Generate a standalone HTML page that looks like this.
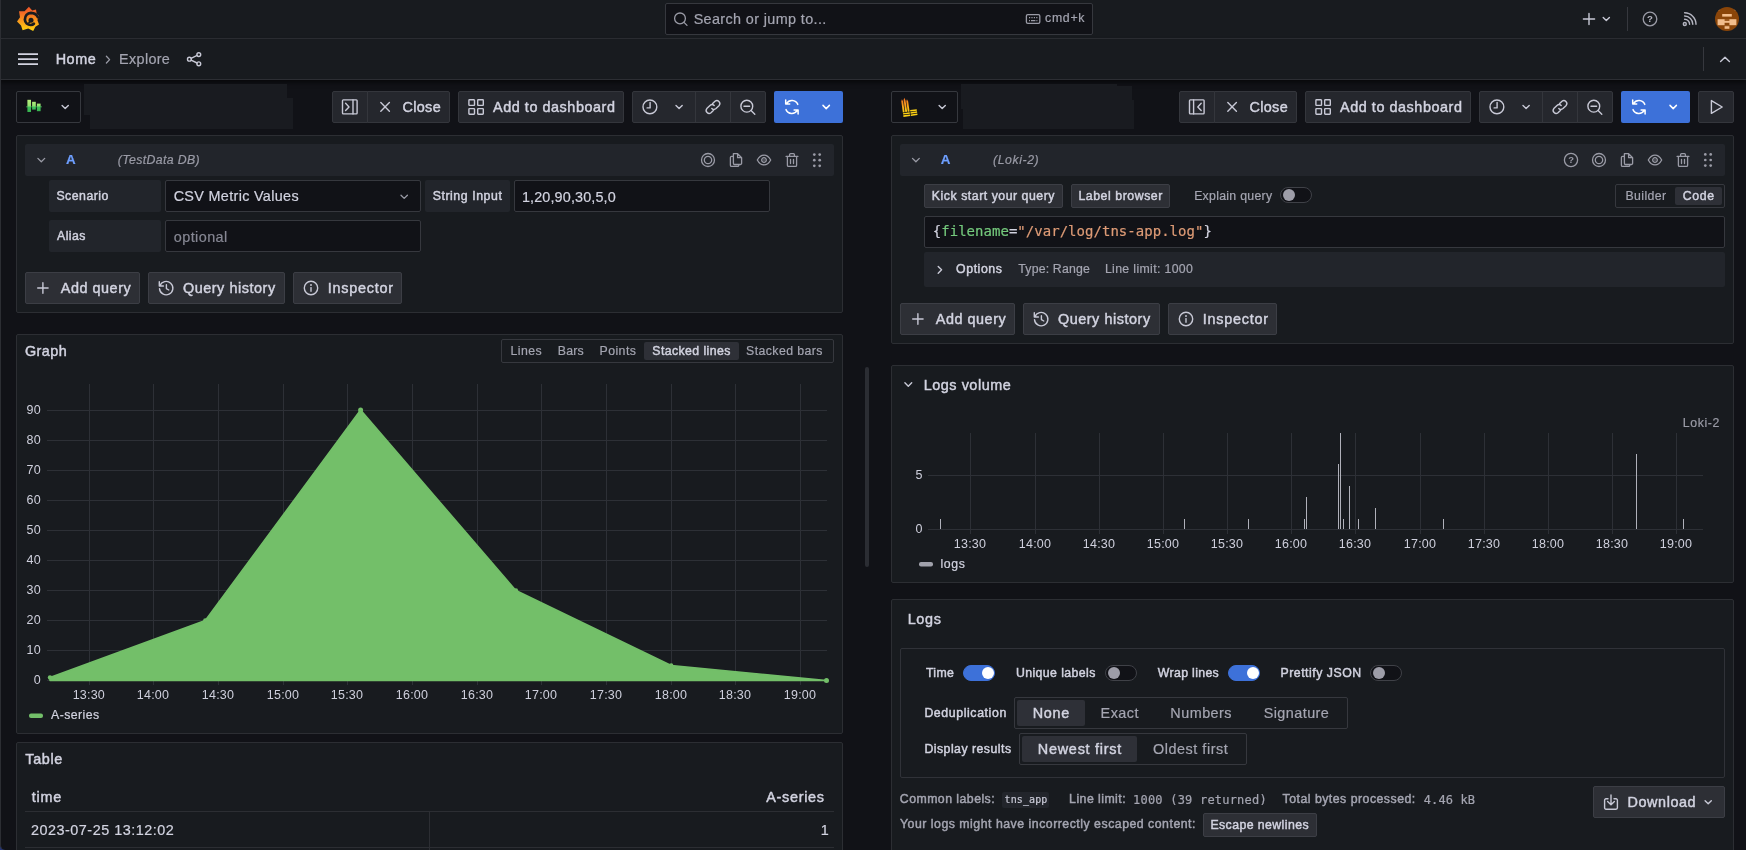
<!DOCTYPE html>
<html lang="en">
<head>
<meta charset="utf-8">
<title>Explore - Grafana</title>
<style>
*{box-sizing:border-box;margin:0;padding:0}
html,body{width:1746px;height:850px;overflow:hidden;background:#111217}
body{position:relative;font-family:"Liberation Sans",sans-serif;color:#ccccdc;font-size:14px}
#root{position:absolute;left:0;top:0;width:1746px;height:850px;overflow:hidden;will-change:transform}
.a{position:absolute}
.t{position:absolute;white-space:nowrap;line-height:20px;height:20px;-webkit-text-stroke:0.2px currentColor}
.m{-webkit-text-stroke:0.45px currentColor}
.mono{font-family:"DejaVu Sans Mono","Liberation Mono",monospace}
.panel{position:absolute;background:#181b1f;border:1px solid #2c2e33;border-radius:2px}
.btn{position:absolute;background:#25272d;border:1px solid #34363c;border-radius:2px;height:32px}
.btn.p{background:#2d2f35;border-color:#3c3e45}
.inp{position:absolute;background:#111217;border:1px solid #36383e;border-radius:2px;height:32px}
.lbl{position:absolute;background:#22252b;border-radius:2px;height:32px}
.row{position:absolute;background:#22252b;border-radius:2px}
svg{position:absolute;overflow:visible}
.ic{fill:none;stroke:#c8c9d6;stroke-width:1.4;stroke-linecap:round;stroke-linejoin:round}
.ig{fill:none;stroke:#9a9ba6;stroke-width:1.3;stroke-linecap:round;stroke-linejoin:round}
.sw{position:absolute;width:32px;height:16px;border-radius:8px;background:#111217;border:1px solid #3f4147}
.sw i{position:absolute;left:2px;top:1px;width:12px;height:12px;border-radius:50%;background:#9d9da8}
.sw.on{background:#3d71d9;border-color:#3d71d9}
.sw.on i{left:17.5px;background:#fff}
.seg{position:absolute;border:1px solid #36383e;border-radius:2px;background:#181b1f}
.act{position:absolute;background:#2e3037;border-radius:2px}
</style>
</head>
<body>
<div id="root">

<!-- ============ TOP NAV ============ -->
<div class="a" style="left:0;top:0;width:1746px;height:39px;background:#181b1f;border-bottom:1px solid #2c2e33"></div>
<div class="a" style="left:0;top:39px;width:1746px;height:41px;background:#181b1f;border-bottom:1px solid #2c2e33;box-shadow:0 3px 4px rgba(0,0,0,.5)"></div>
<div class="a" style="left:0;top:0;width:1px;height:850px;background:#2c2e33"></div>
<div class="a" style="left:665px;top:3px;width:428px;height:32px;background:#111217;border:1px solid #36383e;border-radius:2px"></div>
<div class="a" style="left:1627px;top:7px;width:1px;height:24px;background:#36383e"></div>
<div class="a" style="left:1703px;top:47px;width:1px;height:24px;background:#36383e"></div>

<!-- ============ LEFT TOOLBAR ============ -->
<div class="inp" style="left:16px;top:91px;width:65px"></div>
<div class="a" style="left:84px;top:84px;width:203px;height:30.5px;background:#191b20"></div>
<div class="a" style="left:90px;top:97.5px;width:203px;height:31px;background:#191b20"></div>
<div class="btn" style="left:332px;top:91px;width:36px;border-radius:2px 0 0 2px"></div>
<div class="btn" style="left:367px;top:91px;width:83px;border-radius:0 2px 2px 0"></div>
<div class="btn" style="left:458px;top:91px;width:166px"></div>
<div class="btn" style="left:632px;top:91px;width:64px;border-radius:2px 0 0 2px"></div>
<div class="btn" style="left:695px;top:91px;width:36px;border-radius:0"></div>
<div class="btn" style="left:730px;top:91px;width:36px;border-radius:0 2px 2px 0"></div>
<div class="a" style="left:774px;top:91px;width:69px;height:32px;background:#3d71d9;border-radius:2px"></div>

<!-- ============ RIGHT TOOLBAR ============ -->
<div class="inp" style="left:891px;top:91px;width:67px"></div>
<div class="a" style="left:961px;top:84px;width:156px;height:25px;background:#191b20"></div>
<div class="a" style="left:963px;top:86px;width:169px;height:42.5px;background:#191b20"></div>
<div class="a" style="left:963px;top:100px;width:171px;height:28.5px;background:#191b20"></div>
<div class="btn" style="left:1179px;top:91px;width:36px;border-radius:2px 0 0 2px"></div>
<div class="btn" style="left:1214px;top:91px;width:83px;border-radius:0 2px 2px 0"></div>
<div class="btn" style="left:1305px;top:91px;width:166px"></div>
<div class="btn" style="left:1479px;top:91px;width:64px;border-radius:2px 0 0 2px"></div>
<div class="btn" style="left:1542px;top:91px;width:36px;border-radius:0"></div>
<div class="btn" style="left:1577px;top:91px;width:36px;border-radius:0 2px 2px 0"></div>
<div class="a" style="left:1621px;top:91px;width:69px;height:32px;background:#3d71d9;border-radius:2px"></div>
<div class="btn" style="left:1698px;top:91px;width:36px"></div>

<!-- ============ LEFT: QUERY PANEL ============ -->
<div class="panel" style="left:16px;top:135px;width:827px;height:178px"></div>
<div class="row" style="left:25px;top:144px;width:809px;height:32px"></div>
<div class="lbl" style="left:49px;top:180px;width:112px"></div>
<div class="inp" style="left:165px;top:180px;width:256px"></div>
<div class="lbl" style="left:425px;top:180px;width:85px"></div>
<div class="inp" style="left:514px;top:180px;width:256px"></div>
<div class="lbl" style="left:49px;top:220px;width:112px"></div>
<div class="inp" style="left:165px;top:220px;width:256px"></div>
<div class="btn p" style="left:25px;top:272px;width:115px"></div>
<div class="btn p" style="left:148px;top:272px;width:137px"></div>
<div class="btn p" style="left:293px;top:272px;width:109px"></div>

<!-- ============ LEFT: GRAPH PANEL ============ -->
<div class="panel" style="left:16px;top:334px;width:827px;height:400px"></div>
<div class="seg" style="left:501px;top:339px;width:333px;height:24px"></div>
<div class="act" style="left:644px;top:342px;width:95px;height:18px"></div>

<!-- ============ LEFT: TABLE PANEL ============ -->
<div class="panel" style="left:16px;top:742px;width:827px;height:120px"></div>
<div class="a" style="left:25px;top:811px;width:809px;height:1px;background:#2c2e33"></div>
<div class="a" style="left:25px;top:847px;width:809px;height:1px;background:#2c2e33"></div>
<div class="a" style="left:429px;top:812px;width:1px;height:38px;background:#2c2e33"></div>
<!-- splitter -->
<div class="a" style="left:865px;top:367px;width:4px;height:200px;background:#2b2d33;border-radius:2px"></div>

<!-- ============ RIGHT: QUERY PANEL ============ -->
<div class="panel" style="left:891px;top:135px;width:843px;height:209px"></div>
<div class="row" style="left:900px;top:144px;width:825px;height:32px"></div>
<div class="btn p" style="left:924px;top:184px;width:139px;height:24px"></div>
<div class="btn p" style="left:1071px;top:184px;width:99px;height:24px"></div>
<div class="sw" style="left:1280px;top:187px"><i></i></div>
<div class="seg" style="left:1615px;top:184px;width:110px;height:24px"></div>
<div class="act" style="left:1675px;top:187px;width:47px;height:18px"></div>
<div class="inp" style="left:924px;top:216px;width:801px;height:32px"></div>
<div class="row" style="left:924px;top:252px;width:801px;height:35px"></div>
<div class="btn p" style="left:900px;top:303px;width:115px"></div>
<div class="btn p" style="left:1023px;top:303px;width:137px"></div>
<div class="btn p" style="left:1168px;top:303px;width:109px"></div>

<!-- ============ RIGHT: LOGS VOLUME ============ -->
<div class="panel" style="left:891px;top:365px;width:843px;height:218px"></div>

<!-- ============ RIGHT: LOGS ============ -->
<div class="panel" style="left:891px;top:599px;width:843px;height:260px"></div>
<div class="a" style="left:900px;top:648px;width:825px;height:130px;border:1px solid #303238;border-radius:2px"></div>
<div class="sw on" style="left:963px;top:665px"><i></i></div>
<div class="sw" style="left:1105px;top:665px"><i></i></div>
<div class="sw on" style="left:1228px;top:665px"><i></i></div>
<div class="sw" style="left:1370px;top:665px"><i></i></div>
<div class="seg" style="left:1014px;top:697px;width:334px;height:32px"></div>
<div class="act" style="left:1017px;top:700px;width:68px;height:26px"></div>
<div class="seg" style="left:1019px;top:733px;width:228px;height:32px"></div>
<div class="act" style="left:1022px;top:736px;width:115px;height:26px"></div>
<div class="a" style="left:1002px;top:792px;width:47px;height:16px;background:#22252b;border-radius:2px"></div>
<div class="btn p" style="left:1203px;top:813px;width:114px;height:24px"></div>
<div class="btn p" style="left:1593px;top:786px;width:132px;height:32px"></div>

<div class="a" style="left:0;top:844px;width:6px;height:6px;background:#263572"></div>
<div class="a" style="left:0;top:830px;width:16px;height:20px;background:#111217;border-left:1px solid #2c2e33;border-bottom-left-radius:5px"></div>

<svg id="chart1" style="left:0;top:0" width="850" height="740" font-family="Liberation Sans, sans-serif" font-size="12.5" fill="#cecfdc" letter-spacing="0.2">
<g stroke="#2d3036" stroke-width="1" shape-rendering="crispEdges">
<path d="M47 410.5H827M47 440.5H827M47 470.5H827M47 500.5H827M47 530.5H827M47 560.5H827M47 590.5H827M47 620.5H827M47 650.5H827M47 680.5H827"/>
<path d="M89.5 384V685M153.5 384V685M218.5 384V685M283.5 384V685M347.5 384V685M412.5 384V685M477.5 384V685M541.5 384V685M606.5 384V685M671.5 384V685M735.5 384V685M800.5 384V685"/>
</g>
<path d="M50 677.5L205.3 620.5L360.6 410L515.9 590.5L671.2 665.5L826.5 680.5L50 680.5Z" fill="#73bf69" stroke="#73bf69" stroke-width="1.5" stroke-linejoin="round"/>
<circle cx="50" cy="677.5" r="2.2" fill="#73bf69"/><circle cx="205.3" cy="620.5" r="2.2" fill="#73bf69"/><circle cx="360.6" cy="410" r="2.5" fill="#73bf69"/><circle cx="515.9" cy="590.5" r="2.2" fill="#73bf69"/><circle cx="671.2" cy="665.5" r="2.2" fill="#73bf69"/><circle cx="826.5" cy="680.5" r="2.5" fill="#73bf69"/>
<g text-anchor="end">
<text x="40.8" y="414">90</text><text x="40.8" y="444">80</text><text x="40.8" y="474">70</text><text x="40.8" y="504">60</text><text x="40.8" y="534">50</text><text x="40.8" y="564">40</text><text x="40.8" y="594">30</text><text x="40.8" y="624">20</text><text x="40.8" y="654">10</text><text x="40.8" y="684">0</text>
</g>
<g text-anchor="middle">
<text x="88.8" y="699">13:30</text><text x="153" y="699">14:00</text><text x="218" y="699">14:30</text><text x="283" y="699">15:00</text><text x="347" y="699">15:30</text><text x="412" y="699">16:00</text><text x="477" y="699">16:30</text><text x="541" y="699">17:00</text><text x="606" y="699">17:30</text><text x="671" y="699">18:00</text><text x="735" y="699">18:30</text><text x="800" y="699">19:00</text>
</g>
<rect x="29" y="713.5" width="14" height="4.5" rx="2" fill="#73bf69"/>
</svg>
<svg id="chart2" style="left:0;top:0" width="1746" height="600" font-family="Liberation Sans, sans-serif" font-size="12.5" fill="#cecfdc" letter-spacing="0.2">
<g stroke="#2d3036" stroke-width="1" shape-rendering="crispEdges">
<path d="M928 475.5H1703M928 529.5H1703"/>
<path d="M970.5 433V534M1035.5 433V534M1099.5 433V534M1163.5 433V534M1227.5 433V534M1291.5 433V534M1355.5 433V534M1420.5 433V534M1484.5 433V534M1548.5 433V534M1612.5 433V534M1676.5 433V534"/>
</g>
<g stroke="#b0b1ba" stroke-width="1" shape-rendering="crispEdges">
<path d="M940.5 518.5V529M1184.5 518.5V529M1248.5 518.5V529M1304.5 518.5V529M1306.5 497V529M1338.5 464V529M1340.5 433V529M1343.5 518.5V529M1349.5 486V529M1358.5 518.5V529M1375.5 507.5V529M1443.5 518.5V529M1636.5 454V529M1683.5 518.5V529"/>
</g>
<g text-anchor="end"><text x="922.6" y="479">5</text><text x="922.6" y="532.5">0</text></g>
<g text-anchor="middle">
<text x="970" y="548">13:30</text><text x="1035" y="548">14:00</text><text x="1099" y="548">14:30</text><text x="1163" y="548">15:00</text><text x="1227" y="548">15:30</text><text x="1291" y="548">16:00</text><text x="1355" y="548">16:30</text><text x="1420" y="548">17:00</text><text x="1484" y="548">17:30</text><text x="1548" y="548">18:00</text><text x="1612" y="548">18:30</text><text x="1676" y="548">19:00</text>
</g>
<rect x="919" y="562" width="14" height="4.5" rx="2" fill="#a0a1ab"/>
</svg>

<!-- ============ ICONS ============ -->
<svg id="icons" style="left:0;top:0" width="1746" height="850">
<defs>
<linearGradient id="gl" x1="0" y1="0" x2="0" y2="1"><stop offset="0" stop-color="#ee5528"/><stop offset=".25" stop-color="#f26a25"/><stop offset=".55" stop-color="#f7941e"/><stop offset="1" stop-color="#fdd40e"/></linearGradient>
<linearGradient id="lk" x1="0" y1="0" x2="0" y2="1"><stop offset="0" stop-color="#f36f21"/><stop offset=".6" stop-color="#f9a41a"/><stop offset="1" stop-color="#fbd013"/></linearGradient>
<linearGradient id="td" gradientUnits="userSpaceOnUse" x1="0" y1="99.8" x2="0" y2="112"><stop offset="0" stop-color="#b8ef7d"/><stop offset=".56" stop-color="#8fe070"/><stop offset=".56" stop-color="#3fc15b"/><stop offset="1" stop-color="#37b24f"/></linearGradient>
</defs>

<!-- grafana logo -->
<g>
<path fill="url(#gl)" d="M28.9 6.8L32.2 10.6L36 9.4L36.6 13.4L39.2 16.2L37.4 20L39 24.6L35.4 26.8L33.2 31L28.2 28.6L22.6 30.2L21 25.6L17 21.6L20 17.2L19 11.2L24.6 11.2Z"/>
<path fill="none" stroke="#181b1f" stroke-width="2.7" stroke-linecap="round" d="M37.9 17.2C36.6 14.4 34.2 13 30.9 12.9C27.2 13 25 15.8 24.9 19.6C25.1 22.9 27.6 25 30.8 25C32.2 25 33.2 24.5 33.9 23.8"/>
<circle cx="31" cy="20.3" r="2.5" fill="#181b1f"/>
<path fill="none" stroke="#181b1f" stroke-width="1.8" stroke-linecap="round" d="M31 20.6L29 22.6"/>
</g>
<!-- search -->
<circle class="ig" cx="680" cy="18.4" r="5.4"/><path class="ig" d="M684 22.4L687 25.4"/>
<!-- keyboard -->
<rect class="ig" x="1026.4" y="14.7" width="13.4" height="8.6" rx="1.4"/><path d="M1029 17.6h1.2M1031.4 17.6h1.2M1033.8 17.6h1.2M1036.2 17.6h1.2M1029 20.6h1M1031 20.6h4.4M1036.4 20.6h1" stroke="#9a9ba6" stroke-width="1.1" fill="none"/>
<!-- top right -->
<path class="ic" stroke="#bfc0cc" stroke-width="1.6" d="M1583.4 19H1594.6M1589 13.4V24.6"/>
<g transform="translate(1606.3 18.9)"><path class="ic" stroke="#b4b5c0" stroke-width="1.3" d="M-3.1 -1.5L0 1.6L3.1 -1.5"/></g>
<circle class="ig" cx="1650" cy="19" r="6.8" stroke="#b4b5c0"/><text x="1650" y="22.4" text-anchor="middle" font-family="Liberation Sans, sans-serif" font-size="9.6" font-weight="700" fill="#b4b5c0">?</text>
<g fill="none" stroke="#b4b5c0" stroke-width="1.4" stroke-linecap="round"><circle cx="1684.8" cy="24" r="1.5"/><path d="M1684.6 19.2A4.9 4.9 0 0 1 1689.6 24.2M1684.6 16A8.2 8.2 0 0 1 1692.8 24.2M1684.6 12.8A11.4 11.4 0 0 1 1696 24.2"/></g>
<!-- avatar -->
<clipPath id="avc"><circle cx="1727" cy="19" r="12"/></clipPath>
<g clip-path="url(#avc)"><rect x="1715" y="7" width="24" height="24" fill="#8a4509"/>
<g fill="#f2bd8c"><rect x="1722.2" y="14" width="9.6" height="2.6"/><rect x="1717.6" y="19.2" width="18.8" height="6"/><rect x="1724.6" y="26.2" width="4.8" height="2.6"/><rect x="1717" y="8" width="2.4" height="2.4"/><rect x="1734.6" y="8" width="2.4" height="2.4"/></g>
<g fill="#8a4509"><rect x="1724.6" y="19.2" width="4.8" height="1.6"/><rect x="1724.6" y="22.8" width="4.8" height="2.4"/></g>
</g>
<!-- hamburger / crumbs -->
<path d="M18 54.2H38M18 59.2H38M18 64.2H38" stroke="#d2d3e0" stroke-width="1.7" fill="none"/>
<path class="ig" d="M106.4 56.2L109.6 59.6L106.4 63"/>
<g class="ic" stroke-width="1.3"><circle cx="198.8" cy="54.6" r="1.9"/><circle cx="189.4" cy="59.2" r="1.9"/><circle cx="198.8" cy="63.8" r="1.9"/><path d="M191.1 58.3L197.1 55.4M191.1 60.1L197.1 63"/></g>
<path class="ic" stroke="#b4b5c0" stroke-width="1.7" d="M1720.6 61.5L1725 57.2L1729.4 61.5"/>

<!-- DS pickers -->
<g><rect x="27.4" y="99.8" width="3.6" height="12.2" fill="url(#td)"/><rect x="32.1" y="101.8" width="3.7" height="7.8" fill="url(#td)"/><rect x="36.9" y="103.6" width="3.7" height="7.6" fill="url(#td)"/><rect x="26" y="106.4" width="16" height="0.9" fill="#3fc15b" opacity=".8"/></g>
<g transform="translate(65.2 107)"><path class="ic" stroke="#b4b5c0" stroke-width="1.3" d="M-3.1 -1.5L0 1.6L3.1 -1.5"/></g>
<g transform="translate(901 99.3) rotate(-8) scale(0.92)">
<path fill="url(#lk)" d="M0 2.2L1 0L2 2.6V14.4H0ZM2.7 1.2L3.7 -1.2L4.7 1.6V14.4H2.7ZM5.4 3L6.4 0.8L7.4 3.4V14.4H5.4Z"/>
<path fill="#fbd013" d="M0 15.2H7.4V16.8H0ZM0 17.6H7.4V19.4H0ZM8.2 13H15.4V14.6H8.2ZM8.2 15.4H15.4V17H8.2ZM8.2 17.8H15.4V19.4H8.2Z"/>
</g>
<g transform="translate(942.2 107)"><path class="ic" stroke="#b4b5c0" stroke-width="1.3" d="M-3.1 -1.5L0 1.6L3.1 -1.5"/></g>

<!-- toolbar left -->
<g transform="translate(349.8 106.9)"><rect class="ic" x="-7.3" y="-7" width="14.6" height="14" rx="0.8"/><path class="ic" d="M3.2 -7V7M-4.2 -3.6L-0.8 0L-4.2 3.6"/></g>
<g transform="translate(385.1 106.9)"><path class="ic" d="M-4.3 -4.3L4.3 4.3M4.3 -4.3L-4.3 4.3"/></g>
<g transform="translate(476.1 107)"><rect class="ic" x="-7.2" y="-7.2" width="5.6" height="5.6" rx="0.6"/><rect class="ic" x="1.6" y="-7.2" width="5.6" height="5.6" rx="0.6"/><rect class="ic" x="-7.2" y="1.6" width="5.6" height="5.6" rx="0.6"/><rect class="ic" x="1.6" y="1.6" width="5.6" height="5.6" rx="0.6"/></g>
<g transform="translate(649.9 106.9)"><circle class="ic" r="6.9"/><path class="ic" d="M0.2 -4.4V1H-2.8"/></g>
<g transform="translate(679.1 107)"><path class="ic" stroke="#b4b5c0" stroke-width="1.3" d="M-3.1 -1.5L0 1.6L3.1 -1.5"/></g>
<g transform="translate(713 107)"><path class="ic" d="M-0.6 -3.2L2 -5.8A3 3 0 0 1 6.2 -1.6L3 1.6A3 3 0 0 1 -1.2 1.4M0.6 3.2L-2 5.8A3 3 0 0 1 -6.2 1.6L-3 -1.6A3 3 0 0 1 1.2 -1.4"/></g>
<g transform="translate(747.8 107.2)"><circle class="ic" cx="-1" cy="-1" r="5.9"/><path class="ic" d="M3.3 3.3L7 7M-3.8 -1H1.8"/></g>
<g transform="translate(791.9 107)"><path d="M5.9 -2.6A6.4 6.4 0 0 0 -5.4 -3.4M-6.2 -7V-3H-2.2M-5.9 2.6A6.4 6.4 0 0 0 5.4 3.4M6.2 7V3H2.2" fill="none" stroke="#fff" stroke-width="1.5" stroke-linecap="round" stroke-linejoin="round"/></g>
<g transform="translate(826.2 107)"><path d="M-3.2 -1.6L0 1.6L3.2 -1.6" fill="none" stroke="#fff" stroke-width="1.5" stroke-linecap="round" stroke-linejoin="round"/></g>
<!-- toolbar right -->
<g transform="translate(1196.8 106.9)"><rect class="ic" x="-7.3" y="-7" width="14.6" height="14" rx="0.8"/><path class="ic" d="M-3.2 -7V7M4.4 -3.6L1 0L4.4 3.6"/></g>
<g transform="translate(1232.1 106.9)"><path class="ic" d="M-4.3 -4.3L4.3 4.3M4.3 -4.3L-4.3 4.3"/></g>
<g transform="translate(1323.1 107)"><rect class="ic" x="-7.2" y="-7.2" width="5.6" height="5.6" rx="0.6"/><rect class="ic" x="1.6" y="-7.2" width="5.6" height="5.6" rx="0.6"/><rect class="ic" x="-7.2" y="1.6" width="5.6" height="5.6" rx="0.6"/><rect class="ic" x="1.6" y="1.6" width="5.6" height="5.6" rx="0.6"/></g>
<g transform="translate(1496.9 106.9)"><circle class="ic" r="6.9"/><path class="ic" d="M0.2 -4.4V1H-2.8"/></g>
<g transform="translate(1526.1 107)"><path class="ic" stroke="#b4b5c0" stroke-width="1.3" d="M-3.1 -1.5L0 1.6L3.1 -1.5"/></g>
<g transform="translate(1560 107)"><path class="ic" d="M-0.6 -3.2L2 -5.8A3 3 0 0 1 6.2 -1.6L3 1.6A3 3 0 0 1 -1.2 1.4M0.6 3.2L-2 5.8A3 3 0 0 1 -6.2 1.6L-3 -1.6A3 3 0 0 1 1.2 -1.4"/></g>
<g transform="translate(1594.8 107.2)"><circle class="ic" cx="-1" cy="-1" r="5.9"/><path class="ic" d="M3.3 3.3L7 7M-3.8 -1H1.8"/></g>
<g transform="translate(1638.9 107)"><path d="M5.9 -2.6A6.4 6.4 0 0 0 -5.4 -3.4M-6.2 -7V-3H-2.2M-5.9 2.6A6.4 6.4 0 0 0 5.4 3.4M6.2 7V3H2.2" fill="none" stroke="#fff" stroke-width="1.5" stroke-linecap="round" stroke-linejoin="round"/></g>
<g transform="translate(1673.2 107)"><path d="M-3.2 -1.6L0 1.6L3.2 -1.6" fill="none" stroke="#fff" stroke-width="1.5" stroke-linecap="round" stroke-linejoin="round"/></g>
<path class="ic" d="M1711.4 100.6V113.4L1722.2 107Z"/>

<!-- left query row -->
<path class="ig" d="M37.9 158.4L41.3 161.8L44.7 158.4"/>
<g transform="translate(708 160)"><circle class="ig" r="6.5"/><circle class="ig" r="3.7"/></g><g transform="translate(736 160)"><path class="ig" d="M-2.6 -6.3H1.6L5.6 -2.3V3.3A1.2 1.2 0 0 1 4.4 4.5H-1.4A1.2 1.2 0 0 1 -2.6 3.3ZM1.6 -6.3V-2.3H5.6M-2.6 -3.6H-4.4A1.2 1.2 0 0 0 -5.6 -2.4V5.2A1.2 1.2 0 0 0 -4.4 6.4H1.6A1.2 1.2 0 0 0 2.8 5.2V4.5"/></g><g transform="translate(764 160)"><path class="ig" d="M-6.7 0C-4.8 -3.5 -2.5 -4.9 0 -4.9S4.8 -3.5 6.7 0C4.8 3.5 2.5 4.9 0 4.9S-4.8 3.5 -6.7 0Z"/><circle class="ig" r="2.3"/><circle r="0.7" fill="#9a9ba6"/></g><g transform="translate(792 160)"><path class="ig" d="M-5.9 -3.6H5.9M-2.4 -3.6V-5.4A1 1 0 0 1 -1.4 -6.4H1.4A1 1 0 0 1 2.4 -5.4V-3.6M-4.6 -3.6V5.2A1.2 1.2 0 0 0 -3.4 6.4H3.4A1.2 1.2 0 0 0 4.6 5.2V-3.6M-1.5 -0.6V3.6M1.5 -0.6V3.6"/></g><g transform="translate(817 160.2)" fill="#9a9ba6"><circle cx="-2.7" cy="-5.6" r="1.35"/><circle cx="2.7" cy="-5.6" r="1.35"/><circle cx="-2.7" cy="0" r="1.35"/><circle cx="2.7" cy="0" r="1.35"/><circle cx="-2.7" cy="5.6" r="1.35"/><circle cx="2.7" cy="5.6" r="1.35"/></g>
<path class="ig" stroke="#b4b5c0" d="M401 195.2L404.2 198.4L407.4 195.2"/>
<g transform="translate(42.9 288)"><path class="ic" d="M-5.2 0H5.2M0 -5.2V5.2"/></g><g transform="translate(166.2 288)"><path class="ic" d="M-6.3 -2.2A6.7 6.7 0 1 1 -6.7 0.6M-6.9 -6.2V-2H-2.8M0.2 -3.2V0.6L2.6 2"/></g><g transform="translate(311 288)"><circle class="ic" r="6.7"/><path class="ic" d="M0 -0.4V3.2"/><circle cx="0" cy="-3" r="0.95" fill="#c8c9d6"/></g>

<!-- right query row -->
<path class="ig" d="M912.5 158.4L915.9 161.8L919.3 158.4"/>
<g transform="translate(1571 160)"><circle class="ig" r="6.6"/><text x="0" y="3.3" text-anchor="middle" font-family="Liberation Sans, sans-serif" font-size="9.4" font-weight="700" fill="#9a9ba6">?</text></g><g transform="translate(1599 160)"><circle class="ig" r="6.5"/><circle class="ig" r="3.7"/></g><g transform="translate(1627 160)"><path class="ig" d="M-2.6 -6.3H1.6L5.6 -2.3V3.3A1.2 1.2 0 0 1 4.4 4.5H-1.4A1.2 1.2 0 0 1 -2.6 3.3ZM1.6 -6.3V-2.3H5.6M-2.6 -3.6H-4.4A1.2 1.2 0 0 0 -5.6 -2.4V5.2A1.2 1.2 0 0 0 -4.4 6.4H1.6A1.2 1.2 0 0 0 2.8 5.2V4.5"/></g><g transform="translate(1655 160)"><path class="ig" d="M-6.7 0C-4.8 -3.5 -2.5 -4.9 0 -4.9S4.8 -3.5 6.7 0C4.8 3.5 2.5 4.9 0 4.9S-4.8 3.5 -6.7 0Z"/><circle class="ig" r="2.3"/><circle r="0.7" fill="#9a9ba6"/></g><g transform="translate(1683 160)"><path class="ig" d="M-5.9 -3.6H5.9M-2.4 -3.6V-5.4A1 1 0 0 1 -1.4 -6.4H1.4A1 1 0 0 1 2.4 -5.4V-3.6M-4.6 -3.6V5.2A1.2 1.2 0 0 0 -3.4 6.4H3.4A1.2 1.2 0 0 0 4.6 5.2V-3.6M-1.5 -0.6V3.6M1.5 -0.6V3.6"/></g><g transform="translate(1708 160)" fill="#9a9ba6"><circle cx="-2.7" cy="-5.6" r="1.35"/><circle cx="2.7" cy="-5.6" r="1.35"/><circle cx="-2.7" cy="0" r="1.35"/><circle cx="2.7" cy="0" r="1.35"/><circle cx="-2.7" cy="5.6" r="1.35"/><circle cx="2.7" cy="5.6" r="1.35"/></g>
<path class="ic" stroke-width="1.3" d="M938.2 266.4L941.6 269.8L938.2 273.2"/>
<g transform="translate(917.9 319)"><path class="ic" d="M-5.2 0H5.2M0 -5.2V5.2"/></g><g transform="translate(1041.2 319)"><path class="ic" d="M-6.3 -2.2A6.7 6.7 0 1 1 -6.7 0.6M-6.9 -6.2V-2H-2.8M0.2 -3.2V0.6L2.6 2"/></g><g transform="translate(1186 319)"><circle class="ic" r="6.7"/><path class="ic" d="M0 -0.4V3.2"/><circle cx="0" cy="-3" r="0.95" fill="#c8c9d6"/></g>
<!-- logs volume chevron -->
<path class="ic" d="M904.9 382.8L908.3 386.2L911.7 382.8"/>
<!-- download -->
<path class="ic" d="M1611 795V804.6M1607.6 801.4L1611 804.8L1614.4 801.4M1608 798.8H1606A1.4 1.4 0 0 0 1604.6 800.2V807.8A1.4 1.4 0 0 0 1606 809.2H1616A1.4 1.4 0 0 0 1617.4 807.8V800.2A1.4 1.4 0 0 0 1616 798.8H1614"/>
<g transform="translate(1708.2 802.2)"><path class="ic" stroke="#b4b5c0" stroke-width="1.3" d="M-3.1 -1.5L0 1.6L3.1 -1.5"/></g>
</svg>

<!-- ============ TEXT ============ -->
<div class="t" id="tsearch" style="left:693.67px;top:8.91px;font-size:14.4px;color:#a4a5b1;letter-spacing:0.370px">Search or jump to...</div>
<div class="t" id="tcmd" style="left:1045.01px;top:7.64px;font-size:12.3px;color:#a4a5b1;letter-spacing:0.728px">cmd+k</div>
<div class="t m" id="thome" style="left:55.71px;top:49.01px;font-size:14.4px;color:#d2d3e0;letter-spacing:0.524px">Home</div>
<div class="t" id="texplore" style="left:119.12px;top:49.01px;font-size:14.4px;color:#a4a5b1;letter-spacing:0.324px">Explore</div>
<div class="t m" id="tclose1" style="left:402.46px;top:96.91px;font-size:14.4px;color:#d2d3e0;letter-spacing:0.358px">Close</div>
<div class="t m" id="tadd1" style="left:493.09px;top:96.91px;font-size:14.4px;color:#d2d3e0;letter-spacing:0.548px">Add to dashboard</div>
<div class="t m" id="tclose2" style="left:1249.46px;top:96.91px;font-size:14.4px;color:#d2d3e0;letter-spacing:0.358px">Close</div>
<div class="t m" id="tadd2" style="left:1340.09px;top:96.91px;font-size:14.4px;color:#d2d3e0;letter-spacing:0.548px">Add to dashboard</div>
<div class="t" id="tA1" style="left:66.07px;top:150.46px;font-size:13.4px;color:#6e9fff;font-weight:700">A</div>
<div class="t" id="tds1" style="left:117.87px;top:149.54px;font-size:12.3px;color:#9a9ba6;letter-spacing:0.360px;font-style:italic">(TestData DB)</div>
<div class="t m" id="tscen" style="left:56.42px;top:186.04px;font-size:12.3px;color:#d2d3e0;letter-spacing:0.495px">Scenario</div>
<div class="t" id="tcsv" style="left:173.64px;top:185.91px;font-size:14.4px;color:#d2d3e0;letter-spacing:0.329px">CSV Metric Values</div>
<div class="t m" id="tstr" style="left:432.63px;top:186.04px;font-size:12.3px;color:#d2d3e0;letter-spacing:0.571px">String Input</div>
<div class="t" id="tvals" style="left:521.90px;top:186.61px;font-size:14.4px;color:#d2d3e0;letter-spacing:0.142px">1,20,90,30,5,0</div>
<div class="t m" id="talias" style="left:57.09px;top:225.94px;font-size:12.3px;color:#d2d3e0;letter-spacing:0.421px">Alias</div>
<div class="t" id="topt" style="left:173.81px;top:226.71px;font-size:14.4px;color:#868793;letter-spacing:0.431px">optional</div>
<div class="t m" id="taq1" style="left:60.85px;top:278.01px;font-size:14.4px;color:#d2d3e0;letter-spacing:0.526px">Add query</div>
<div class="t m" id="tqh1" style="left:182.92px;top:278.01px;font-size:14.4px;color:#d2d3e0;letter-spacing:0.550px">Query history</div>
<div class="t m" id="tin1" style="left:327.71px;top:278.01px;font-size:14.4px;color:#d2d3e0;letter-spacing:0.763px">Inspector</div>
<div class="t m" id="tgraph" style="left:24.89px;top:341.21px;font-size:14.4px;color:#d2d3e0;letter-spacing:0.462px">Graph</div>
<div class="t" id="tg1" style="left:510.53px;top:340.74px;font-size:12.3px;color:#a4a5b1;letter-spacing:0.436px">Lines</div>
<div class="t" id="tg2" style="left:557.73px;top:340.74px;font-size:12.3px;color:#a4a5b1;letter-spacing:0.241px">Bars</div>
<div class="t" id="tg3" style="left:599.52px;top:340.74px;font-size:12.3px;color:#a4a5b1;letter-spacing:0.440px">Points</div>
<div class="t m" id="tg4" style="left:652.28px;top:340.74px;font-size:12.3px;color:#d2d3e0;letter-spacing:0.418px">Stacked lines</div>
<div class="t" id="tg5" style="left:746.03px;top:340.74px;font-size:12.3px;color:#a4a5b1;letter-spacing:0.429px">Stacked bars</div>
<div class="t" id="tleg1" style="left:51.00px;top:704.94px;font-size:12.3px;color:#d2d3e0;letter-spacing:0.424px">A-series</div>
<div class="t m" id="ttable" style="left:25.32px;top:748.91px;font-size:14.4px;color:#d2d3e0;letter-spacing:0.651px">Table</div>
<div class="t m" id="ttime" style="left:31.75px;top:786.81px;font-size:14.4px;color:#d2d3e0;letter-spacing:0.732px">time</div>
<div class="t m" id="tas" style="left:766.31px;top:787.01px;font-size:14.4px;color:#d2d3e0;letter-spacing:0.696px">A-series</div>
<div class="t" id="tdate" style="left:31.00px;top:819.91px;font-size:14.4px;color:#d2d3e0;letter-spacing:0.504px">2023-07-25 13:12:02</div>
<div class="t" id="tone" style="left:820.84px;top:819.81px;font-size:14.4px;color:#d2d3e0">1</div>
<div class="t" id="tA2" style="left:940.73px;top:150.46px;font-size:13.4px;color:#6e9fff;font-weight:700">A</div>
<div class="t" id="tds2" style="left:993.09px;top:149.54px;font-size:12.3px;color:#9a9ba6;letter-spacing:0.553px;font-style:italic">(Loki-2)</div>
<div class="t m" id="tkick" style="left:931.86px;top:186.04px;font-size:12.3px;color:#d2d3e0;letter-spacing:0.528px">Kick start your query</div>
<div class="t m" id="tlb" style="left:1078.43px;top:186.04px;font-size:12.3px;color:#d2d3e0;letter-spacing:0.556px">Label browser</div>
<div class="t" id="texpl" style="left:1194.14px;top:185.84px;font-size:12.3px;color:#a4a5b1;letter-spacing:0.283px">Explain query</div>
<div class="t" id="tbuilder" style="left:1625.52px;top:185.54px;font-size:12.3px;color:#a4a5b1;letter-spacing:0.379px">Builder</div>
<div class="t m" id="tcode" style="left:1682.70px;top:185.54px;font-size:12.3px;color:#d2d3e0;letter-spacing:0.658px">Code</div>
<div class="t mono" id="tquery" style="left:932.75px;top:221.06px;font-size:14px;color:#d2d3e0;letter-spacing:0.030px">{<span style="color:#74c97c">filename</span>=<span style="color:#de9b76">"/var/log/tns-app.log"</span>}</div>
<div class="t m" id="topts" style="left:956.11px;top:258.54px;font-size:12.3px;color:#d2d3e0;letter-spacing:0.561px">Options</div>
<div class="t" id="ttype" style="left:1018.36px;top:258.54px;font-size:12.3px;color:#a4a5b1;letter-spacing:0.165px">Type: Range</div>
<div class="t" id="tll" style="left:1104.89px;top:258.54px;font-size:12.3px;color:#a4a5b1;letter-spacing:0.352px">Line limit: 1000</div>
<div class="t m" id="taq2" style="left:935.85px;top:309.01px;font-size:14.4px;color:#d2d3e0;letter-spacing:0.526px">Add query</div>
<div class="t m" id="tqh2" style="left:1057.92px;top:309.01px;font-size:14.4px;color:#d2d3e0;letter-spacing:0.550px">Query history</div>
<div class="t m" id="tin2" style="left:1202.71px;top:309.01px;font-size:14.4px;color:#d2d3e0;letter-spacing:0.763px">Inspector</div>
<div class="t m" id="tlv" style="left:923.71px;top:375.11px;font-size:14.4px;color:#d2d3e0;letter-spacing:0.544px">Logs volume</div>
<div class="t" id="tloki" style="left:1682.74px;top:412.84px;font-size:12.3px;color:#9a9ba6;letter-spacing:0.615px">Loki-2</div>
<div class="t" id="tleg2" style="left:940.55px;top:554.04px;font-size:12.3px;color:#d2d3e0;letter-spacing:0.576px">logs</div>
<div class="t m" id="tlogs" style="left:907.71px;top:608.81px;font-size:14.4px;color:#d2d3e0;letter-spacing:0.654px">Logs</div>
<div class="t m" id="ttm" style="left:925.94px;top:662.54px;font-size:12.3px;color:#d2d3e0;letter-spacing:0.354px">Time</div>
<div class="t m" id="tul" style="left:1015.91px;top:662.54px;font-size:12.3px;color:#d2d3e0;letter-spacing:0.415px">Unique labels</div>
<div class="t m" id="twl" style="left:1157.82px;top:662.54px;font-size:12.3px;color:#d2d3e0;letter-spacing:0.336px">Wrap lines</div>
<div class="t m" id="tpj" style="left:1280.43px;top:662.54px;font-size:12.3px;color:#d2d3e0;letter-spacing:0.528px">Prettify JSON</div>
<div class="t m" id="tdd" style="left:924.39px;top:702.94px;font-size:12.3px;color:#d2d3e0;letter-spacing:0.613px">Deduplication</div>
<div class="t m" id="tnone" style="left:1032.71px;top:702.71px;font-size:14.4px;color:#d2d3e0;letter-spacing:0.690px">None</div>
<div class="t" id="texact" style="left:1100.61px;top:702.71px;font-size:14.4px;color:#a4a5b1;letter-spacing:0.445px">Exact</div>
<div class="t" id="tnum" style="left:1170.34px;top:702.71px;font-size:14.4px;color:#a4a5b1;letter-spacing:0.474px">Numbers</div>
<div class="t" id="tsig" style="left:1263.67px;top:702.71px;font-size:14.4px;color:#a4a5b1;letter-spacing:0.446px">Signature</div>
<div class="t m" id="tdr" style="left:924.39px;top:738.74px;font-size:12.3px;color:#d2d3e0;letter-spacing:0.480px">Display results</div>
<div class="t m" id="tnf" style="left:1037.82px;top:738.51px;font-size:14.4px;color:#d2d3e0;letter-spacing:0.756px">Newest first</div>
<div class="t" id="tof" style="left:1152.98px;top:738.51px;font-size:14.4px;color:#a4a5b1;letter-spacing:0.542px">Oldest first</div>
<div class="t m" id="tcl" style="left:899.80px;top:789.14px;font-size:12.3px;color:#a4a5b1;letter-spacing:0.462px">Common labels:</div>
<div class="t mono" id="ttns" style="left:1004.51px;top:790.14px;font-size:10px;color:#c8c9d6;letter-spacing:0.112px">tns_app</div>
<div class="t m" id="tlim" style="left:1069.12px;top:789.14px;font-size:12.3px;color:#a4a5b1;letter-spacing:0.454px">Line limit:</div>
<div class="t mono" id="tret" style="left:1133.07px;top:789.65px;font-size:12px;color:#a4a5b1;letter-spacing:0.208px">1000 (39 returned)</div>
<div class="t m" id="ttb" style="left:1282.54px;top:789.14px;font-size:12.3px;color:#a4a5b1;letter-spacing:0.493px">Total bytes processed:</div>
<div class="t mono" id="tkb" style="left:1423.77px;top:789.65px;font-size:12px;color:#a4a5b1;letter-spacing:0.120px">4.46 kB</div>
<div class="t m" id="tyl" style="left:900.01px;top:813.84px;font-size:12.3px;color:#a4a5b1;letter-spacing:0.511px">Your logs might have incorrectly escaped content:</div>
<div class="t m" id="tesc" style="left:1210.43px;top:814.84px;font-size:12.3px;color:#d2d3e0;letter-spacing:0.420px">Escape newlines</div>
<div class="t m" id="tdl" style="left:1627.56px;top:791.91px;font-size:14.4px;color:#d2d3e0;letter-spacing:0.582px">Download</div>

</div>
</body>
</html>
